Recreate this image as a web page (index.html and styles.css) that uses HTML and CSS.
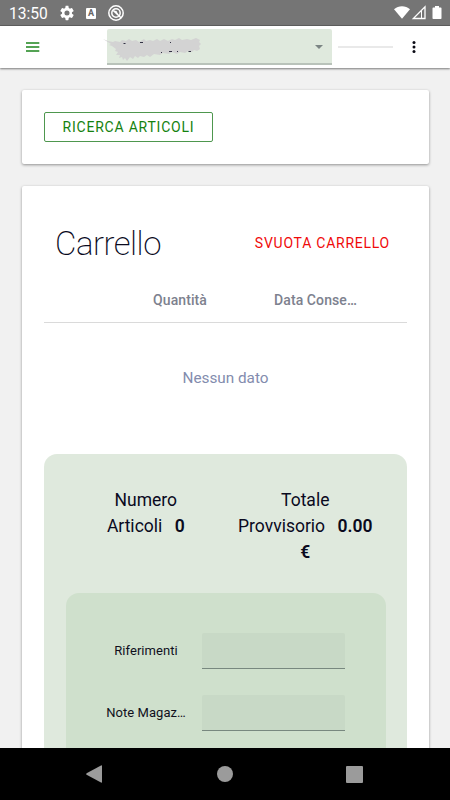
FILE: index.html
```html
<!DOCTYPE html>
<html lang="it">
<head>
<meta charset="utf-8">
<meta name="viewport" content="width=device-width, initial-scale=1">
<title>Carrello</title>
<link rel="stylesheet" href="styles.css">
</head>
<body>
<div class="phone">
	<div class="status">
		<span class="clock">13:50</span>
		<svg class="gear" width="16" height="16" viewBox="0 0 24 24"><path d="M19.4 13a7.500 7.500 0 0 0 0-2l2.300-1.800c.2-.2.300-.5.200-.7l-2.200-3.800c-.1-.2-.4-.3-.7-.2l-2.700 1.100a8 8 0 0 0-1.700-1L14.200 1.700c0-.3-.3-.5-.6-.5H10.400c-.3 0-.5.200-.6.500L9.400 4.600a8 8 0 0 0-1.700 1L5 4.500c-.3-.1-.6 0-.7.200L2.100 8.500c-.1.200-.1.500.2.700L4.600 11a7.500 7.500 0 0 0 0 2l-2.300 1.800c-.3.200-.3.500-.2.700l2.200 3.800c.1.200.4.300.7.200l2.700-1.100c.5.400 1.100.8 1.700 1l.4 2.900c.1.300.3.500.6.500h3.200c.3 0 .6-.2.600-.5l.4-2.900a8 8 0 0 0 1.700-1l2.700 1.100c.3.100.6 0 .7-.2l2.200-3.800c.1-.2 0-.5-.2-.7zM12 15.800a3.800 3.800 0 1 1 0-7.600 3.800 3.800 0 0 1 0 7.600z"/></svg>
		<span class="badge-a">A</span>
		<svg class="dnd" width="16" height="16" viewBox="0 0 16 16"><circle cx="8" cy="8" r="7.200"/><circle cx="8" cy="8" r="4.200"/><path d="M5.300 5.500L13 12.800"/><path class="core" d="M5.500 5.500L8.500 6l2 4z"/></svg>
		<svg class="signals" width="50" height="16" viewBox="0 0 50 16">
			<path d="M1 4.200C5.500.3 12.500.3 17 4.200L9 13.800z"/>
			<path class="cell" d="M32 1.800v11.700H20.300z"/>
			<path class="cell-in" d="M28.500 6v7"/>
			<path d="M42 1h4v1.500h1.700q.8 0 .8.800v9.900q0 .8-.8.800h-7.400q-.8 0-.8-.8V3.300q0-.8.8-.8H42z"/>
		</svg>
	</div>

	<div class="topbar">
		<svg class="menu" width="14" height="10" viewBox="0 0 14 10"><path d="M0 1h13.300M0 5h13.300M0 9h13.300"/></svg>
		<div class="select">
			<!-- nome cliente oscurato -->
			<svg class="smudge" width="98" height="30" viewBox="0 0 98 30">
				<path d="M0 7L5 9 10 10 12 9 17 10 19 8 23 9 26 7 29 9 33 8 36 10 41 7 43 9 47 8 50 9 54 7 57 9 61 7 65 9 69 7 72 8 76 6 79 8 84 7 88 8 93 6 97 8 96 10 98 12 96 14 97 17 94 19 91 18 89 20 85 19 82 21 77 20 74 22 69 20 66 22 60 21 57 23 51 22 47 25 44 23 41 25 37 24 35 26 32 24 30 27 27 25 24 29 22 26 20 28 19 25 16 26 17 23 13 23 15 20 12 19 13 17 9 14 6 13 8 12z"/>
				<path class="ink" d="M20.500 11.500h2M37 10.500h3M67 10.500h1M58 20.500h1M66 19.500h3M74 19.500h1M85.500 19.500h2.500"/>
			</svg>
			<span class="arrow"></span>
		</div>
		<div class="line"></div>
		<svg class="dots" width="4" height="12" viewBox="0 0 4 12"><circle cx="2" cy="1.500" r="1.500"/><circle cx="2" cy="6" r="1.500"/><circle cx="2" cy="10.500" r="1.500"/></svg>
	</div>

	<div class="content">
		<div class="card search">
			<button class="btn-search">RICERCA ARTICOLI</button>
		</div>
		<div class="card cart">
			<div class="cart-head">
				<h1>Carrello</h1>
				<button class="btn-empty">SVUOTA CARRELLO</button>
			</div>
			<div class="thead">
				<span class="th qty">Quantità</span>
				<span class="th date">Data Conse…</span>
			</div>
			<div class="nodata">Nessun dato</div>
			<div class="summary">
				<div class="totals">
					<div class="total">Numero<br>Articoli <b>0</b></div>
					<div class="total">Totale<br>Provvisorio <b>0.00<br>€</b></div>
				</div>
				<div class="form">
					<label class="row"><span>Riferimenti</span><input type="text"></label>
					<label class="row"><span>Note Magaz…</span><input type="text"></label>
				</div>
			</div>
		</div>
	</div>

	<div class="navbar">
		<svg width="17" height="18" viewBox="0 0 17 18"><path d="M.6 8.200L15 .4q1-.4 1 .6v16q0 1-1 .6L.6 9.800q-.8-.8 0-1.600z"/></svg>
		<svg width="16" height="16" viewBox="0 0 16 16"><circle cx="8" cy="8" r="8"/></svg>
		<svg width="17" height="17" viewBox="0 0 17 17"><rect width="17" height="17" rx="1"/></svg>
	</div>
</div>
</body>
</html>
```

FILE: styles.css
```css
*{box-sizing:border-box;}
body{margin:0;background:#f1f1f1;font-family:Roboto,"Liberation Sans",sans-serif;color:#0a0a1e;}
button{font-family:inherit;background:none;cursor:pointer;}
.phone{display:flex;flex-direction:column;width:450px;height:800px;overflow:hidden;}

/* barra di stato */
.status{flex:none;display:flex;align-items:center;height:26px;padding:0 7px 0 9px;background:#757575;border-bottom:1px solid #606060;color:#fff;}
.status svg{fill:#fff;}
.clock{width:50px;font-size:15.6px;line-height:26px;padding-top:2px;}
.badge-a{width:10px;height:11px;margin:1px 12px 0 11px;border-radius:1px;background:#fff;color:#666;font-size:9px;line-height:11px;font-weight:700;text-align:center;}
.status .dnd{fill:none;stroke:#fff;stroke-width:1.5;}
.dnd .core{fill:#fff;stroke:none;}
.signals{margin-left:auto;}
.signals .cell{fill:none;stroke:#fff;stroke-width:1.3;}
.signals .cell-in{stroke:#fff;stroke-width:1;}

/* testata */
.topbar{flex:none;position:relative;display:flex;align-items:center;height:42px;padding-left:26px;background:#fff;box-shadow:0 1px 2px rgba(0,0,0,.5);}
.menu{stroke:#1c851c;stroke-width:1.3;}
.select{display:flex;align-items:center;justify-content:space-between;width:225px;height:36px;margin-left:67px;padding-right:9px;background:#dfe9dd;border-bottom:2px solid #b9c3ba;border-radius:2px 2px 0 0;}
.smudge{margin:2px 0 0 -4px;fill:#d3d3d3;}
.smudge .ink{stroke:#334;stroke-width:1;}
.arrow{margin-top:2px;border:4px solid transparent;border-top-color:#7c8584;border-bottom:0;}
.line{width:55px;height:2px;margin-left:6px;background:#e9e9e9;}
.dots{margin-left:19px;fill:#0a0a14;}

.content{flex:1;min-height:0;overflow:hidden;padding:22px 21px 0 22px;}
.card{background:#fff;border-radius:2px;box-shadow:0 1px 3px rgba(0,0,0,.4);}
.search{height:74px;padding:22px;}
.btn-search{display:block;width:169px;height:30px;padding:0;border:1px solid #4e974e;border-radius:2px;color:#15820f;font-size:14px;font-weight:400;letter-spacing:.78px;}

/* carrello */
.cart{height:640px;margin-top:22px;padding:34px 22px 0;}
.cart-head{display:flex;align-items:center;justify-content:space-between;height:46px;padding:0 17px 0 11px;}
h1{margin:0;font-size:33px;font-weight:200;letter-spacing:-.5px;}
.btn-empty{border:0;padding:0;color:#f00a0a;font-size:14px;font-weight:400;letter-spacing:.75px;}
.thead{display:flex;align-items:center;height:57px;padding-top:12px;border-bottom:1px solid #dadada;color:#7d818e;font-size:14px;font-weight:500;letter-spacing:.1px;}
.th{white-space:nowrap;}
.qty{width:121px;margin-left:109px;}
.nodata{height:131px;line-height:110px;text-align:center;font-size:15.3px;color:#838cae;}
.summary{height:400px;padding:33px 21px 0 22px;background:#dfe9dd;border-radius:13px;}
.totals{display:grid;grid-template-columns:1fr 1fr;height:106px;margin-right:1px;}
.total{font-size:17.5px;line-height:26px;font-weight:400;text-align:center;}
.total b{margin-left:8px;font-weight:600;}
.form{height:260px;padding:40px 41px 0 40px;background:#cfe0cc;border-radius:13px;}
.row{display:flex;align-items:center;height:36px;margin-bottom:26px;color:#10101c;font-size:13px;}
.row span{width:80px;margin-right:16px;padding-bottom:2px;text-align:center;white-space:nowrap;letter-spacing:.06px;}
.row input{width:143px;height:36px;padding:0 8px;border:0;border-bottom:1px solid #78887f;border-radius:2px 2px 0 0;background:#c8d9c6;font:inherit;outline:none;}

.navbar{flex:none;display:flex;align-items:center;justify-content:space-between;height:52px;padding:0 87px 0 86px;background:#000;}
.navbar svg{fill:#9b9b9b;}
```
